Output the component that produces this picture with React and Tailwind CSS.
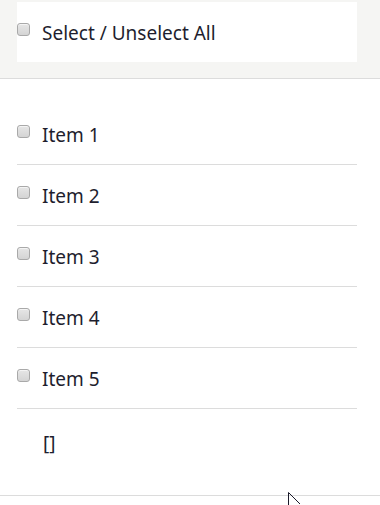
import React from "react";

function Box() {
  return (
    <span className="inline-block w-[13px] h-[13px] rounded-[3px] border border-[#a9a9a9] bg-gradient-to-b from-[#e6e6e6] to-[#d4d4d4] shadow-[inset_0_1px_0_#f4f4f4] shrink-0 mt-[-5px]" />
  );
}

export default function App() {
  const items = ["Item 1", "Item 2", "Item 3", "Item 4", "Item 5"];
  return (
    <div className="relative w-[380px] h-[505px] bg-white overflow-hidden text-[#1e1e2e]" style={{ fontFamily: '"Noto Sans", "Open Sans", sans-serif' }}>
      <div className="bg-[#f5f5f3] border-b border-[#dcdcdc] h-[79px] pt-[2px]">
        <div className="ml-[17px] w-[340px] h-[60px] bg-white flex items-center gap-[12px] text-[19px]">
          <Box />
          <span className="mt-[2px]">Select / Unselect All</span>
        </div>
      </div>
      <div className="pt-[25px] px-[17px] w-[374px]">
        {items.map((it) => (
          <div key={it} className="h-[61px] border-b border-[#dcdcdc] flex items-center gap-[12px] text-[19px]">
            <Box />
            <span className="mt-[2px]">{it}</span>
          </div>
        ))}
        <div className="h-[68px] flex items-center pl-[26px] text-[19px]">[]</div>
      </div>
      <div className="absolute left-0 right-0 top-[495px] border-t border-[#dcdcdc]" />
      <svg className="absolute left-[288px] top-[492px]" width="14" height="14" viewBox="0 0 14 14">
        <path d="M0.5 0.5 L0.5 13 M0.5 0.5 L12 12" stroke="#1a1a2a" strokeWidth="1" fill="none" />
      </svg>
    </div>
  );
}
